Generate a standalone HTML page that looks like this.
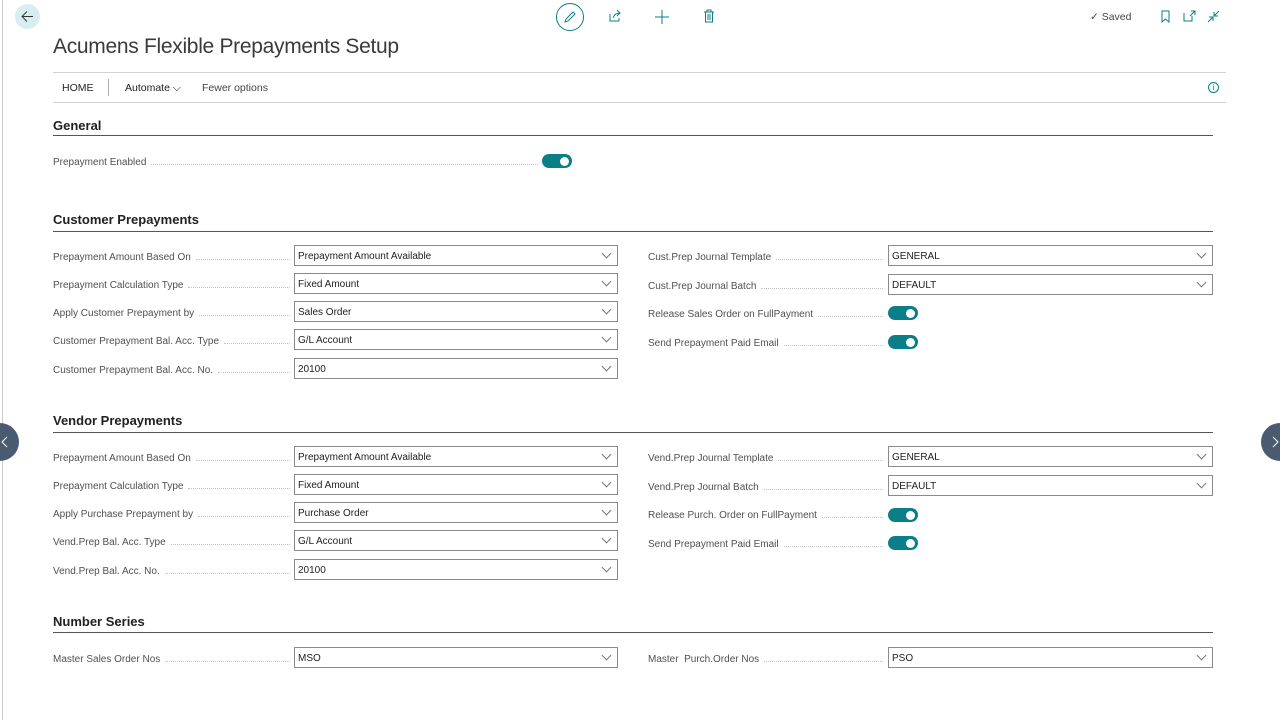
<!DOCTYPE html>
<html><head><style>
*{box-sizing:border-box;margin:0;padding:0}
body{width:1280px;height:720px;background:#fff;font-family:"Liberation Sans",sans-serif;position:relative;overflow:hidden;color:#212121}
.a{position:absolute}
.lbl{position:absolute;font-size:10px;color:#505050;white-space:nowrap;display:flex;align-items:center;height:20px;overflow:hidden;padding-top:1px}
.lbl span{flex:none;background:#fff;padding-right:5px}
.lbl i{flex:1;border-bottom:1px dotted #c4c4c4;margin-top:4px}
.inp{position:absolute;height:21px;border:1px solid #8a8a8a;font-size:10px;color:#212121;padding:5px 3px 0;}
.inp:after{content:"";position:absolute;right:7px;top:4px;width:6px;height:6px;border-right:1px solid #777;border-bottom:1px solid #777;transform:rotate(45deg)}
.h{position:absolute;left:53px;font-size:13px;font-weight:bold;color:#212121}
.hl{position:absolute;left:53px;width:1160px;height:1px;background:#555}
.tg{position:absolute;width:30px;height:14px;border-radius:7px;background:#0a7f87}
.tg:after{content:"";position:absolute;right:3px;top:2.5px;width:9px;height:9px;border-radius:50%;background:#fff}
</style></head><body>
<div class="a" style="left:2px;top:0;width:1px;height:720px;background:#ccc"></div>
<div class="a" style="left:15px;top:4px;width:25px;height:25px;border-radius:50%;background:#d6eef0"></div>
<svg class="a" style="left:20px;top:9px" width="15" height="15"><path d="M13 7.5H2M7 2.5L2 7.5 7 12.5" stroke="#333" fill="none" stroke-width="1"/></svg>
<div class="a" style="left:556px;top:3px;width:28px;height:28px;border-radius:50%;border:1px solid #0a7f87"></div>
<svg class="a" style="left:563px;top:10px" width="14" height="14"><path d="M2 12l1-3 7-7 2 2-7 7z" stroke="#0a7f87" fill="none"/></svg>
<svg class="a" style="left:608px;top:9px" width="14" height="14"><path d="M2 5v7h9V9M5 9c1-3 3-5 7-5M9 1l3 3-3 3" stroke="#0a7f87" fill="none"/></svg>
<svg class="a" style="left:655px;top:10px" width="14" height="14"><path d="M7 0v14M0 7h14" stroke="#0a7f87"/></svg>
<svg class="a" style="left:703px;top:9px" width="12" height="14"><path d="M1 3h10M4 3V1h4v2M2.5 3v10h7V3M5 5v6M7 5v6" stroke="#0a7f87" fill="none"/></svg>
<div class="a" style="left:1090px;top:11px;font-size:10.5px;color:#444">✓ Saved</div>
<svg class="a" style="left:1160px;top:10px" width="12" height="13"><path d="M2 1h7v11L5.5 9 2 12z" stroke="#0a7f87" fill="none"/></svg>
<svg class="a" style="left:1183px;top:10px" width="13" height="13"><path d="M1 3v8h8V6M8 1h4v4M12 1L7 6" stroke="#0a7f87" fill="none"/></svg>
<svg class="a" style="left:1207px;top:10px" width="13" height="13"><path d="M12 1L7 6M7 2v4h4M1 12l5-5M2 7h4v4" stroke="#0a7f87" fill="none"/></svg>
<div class="a" style="left:53px;top:35px;font-size:21px;color:#3a3a3a;letter-spacing:-0.3px">Acumens Flexible Prepayments Setup</div>
<div class="a" style="left:53px;top:72px;width:1173px;height:1px;background:#d0d0d0"></div>
<div class="a" style="left:53px;top:102px;width:1173px;height:1px;background:#d0d0d0"></div>
<div class="a" style="left:62px;top:82px;font-size:10.5px;color:#222">HOME</div>
<div class="a" style="left:108px;top:79px;width:1px;height:17px;background:#aaa"></div>
<div class="a" style="left:125px;top:82px;font-size:10.5px;color:#222">Automate ⌵</div>
<div class="a" style="left:202px;top:82px;font-size:10.5px;color:#444">Fewer options</div>
<div class="a" style="left:1208px;top:82px;width:11px;height:11px;border:1px solid #0a7f87;border-radius:50%;font-size:8px;color:#0a7f87;text-align:center;line-height:9px">i</div>
<div class="a" style="left:-19px;top:423px;width:38px;height:38px;border-radius:50%;background:#4a5a70"></div>
<div class="a" style="left:1261px;top:423px;width:38px;height:38px;border-radius:50%;background:#4a5a70"></div>
<svg class="a" style="left:0;top:436px" width="10" height="12"><path d="M7 1L2 6l5 5" stroke="#fff" fill="none"/></svg>
<svg class="a" style="left:1270px;top:436px" width="10" height="12"><path d="M3 1l5 5-5 5" stroke="#fff" fill="none"/></svg>

<div class="h" style="top:118px">General</div><div class="hl" style="top:135px"></div>
<div class="lbl" style="left:53px;top:152px;width:485px"><span>Prepayment Enabled</span><i></i></div>
<div class="tg" style="left:542px;top:154px"></div>

<div class="h" style="top:212px">Customer Prepayments</div><div class="hl" style="top:231px"></div>
<div class="h" style="top:413px">Vendor Prepayments</div><div class="hl" style="top:432px"></div>
<div class="h" style="top:614px">Number Series</div><div class="hl" style="top:632px"></div>

<div class="lbl" style="left:53px;top:247px;width:237px"><span>Prepayment Amount Based On</span><i></i></div><div class="inp" style="left:294px;top:245px;width:324px">Prepayment Amount Available</div>
<div class="lbl" style="left:53px;top:275px;width:237px"><span>Prepayment Calculation Type</span><i></i></div><div class="inp" style="left:294px;top:273px;width:324px">Fixed Amount</div>
<div class="lbl" style="left:53px;top:303px;width:237px"><span>Apply Customer Prepayment by</span><i></i></div><div class="inp" style="left:294px;top:301px;width:324px">Sales Order</div>
<div class="lbl" style="left:53px;top:331px;width:237px"><span>Customer Prepayment Bal. Acc. Type</span><i></i></div><div class="inp" style="left:294px;top:329px;width:324px">G/L Account</div>
<div class="lbl" style="left:53px;top:360px;width:237px"><span>Customer Prepayment Bal. Acc. No.</span><i></i></div><div class="inp" style="left:294px;top:358px;width:324px">20100</div>

<div class="lbl" style="left:648px;top:247px;width:235px"><span>Cust.Prep Journal Template</span><i></i></div><div class="inp" style="left:888px;top:245px;width:325px">GENERAL</div>
<div class="lbl" style="left:648px;top:276px;width:235px"><span>Cust.Prep Journal Batch</span><i></i></div><div class="inp" style="left:888px;top:274px;width:325px">DEFAULT</div>
<div class="lbl" style="left:648px;top:304px;width:235px"><span>Release Sales Order on FullPayment</span><i></i></div><div class="tg" style="left:888px;top:306px"></div>
<div class="lbl" style="left:648px;top:333px;width:235px"><span>Send Prepayment Paid Email</span><i></i></div><div class="tg" style="left:888px;top:335px"></div>

<div class="lbl" style="left:53px;top:448px;width:237px"><span>Prepayment Amount Based On</span><i></i></div><div class="inp" style="left:294px;top:446px;width:324px">Prepayment Amount Available</div>
<div class="lbl" style="left:53px;top:476px;width:237px"><span>Prepayment Calculation Type</span><i></i></div><div class="inp" style="left:294px;top:474px;width:324px">Fixed Amount</div>
<div class="lbl" style="left:53px;top:504px;width:237px"><span>Apply Purchase Prepayment by</span><i></i></div><div class="inp" style="left:294px;top:502px;width:324px">Purchase Order</div>
<div class="lbl" style="left:53px;top:532px;width:237px"><span>Vend.Prep Bal. Acc. Type</span><i></i></div><div class="inp" style="left:294px;top:530px;width:324px">G/L Account</div>
<div class="lbl" style="left:53px;top:561px;width:237px"><span>Vend.Prep Bal. Acc. No.</span><i></i></div><div class="inp" style="left:294px;top:559px;width:324px">20100</div>

<div class="lbl" style="left:648px;top:448px;width:235px"><span>Vend.Prep Journal Template</span><i></i></div><div class="inp" style="left:888px;top:446px;width:325px">GENERAL</div>
<div class="lbl" style="left:648px;top:477px;width:235px"><span>Vend.Prep Journal Batch</span><i></i></div><div class="inp" style="left:888px;top:475px;width:325px">DEFAULT</div>
<div class="lbl" style="left:648px;top:505px;width:235px"><span>Release Purch. Order on FullPayment</span><i></i></div><div class="tg" style="left:888px;top:508px"></div>
<div class="lbl" style="left:648px;top:534px;width:235px"><span>Send Prepayment Paid Email</span><i></i></div><div class="tg" style="left:888px;top:536px"></div>

<div class="lbl" style="left:53px;top:649px;width:237px"><span>Master Sales Order Nos</span><i></i></div><div class="inp" style="left:294px;top:647px;width:324px">MSO</div>
<div class="lbl" style="left:648px;top:649px;width:235px"><span>Master&nbsp; Purch.Order Nos</span><i></i></div><div class="inp" style="left:888px;top:647px;width:325px">PSO</div>
</body></html>
